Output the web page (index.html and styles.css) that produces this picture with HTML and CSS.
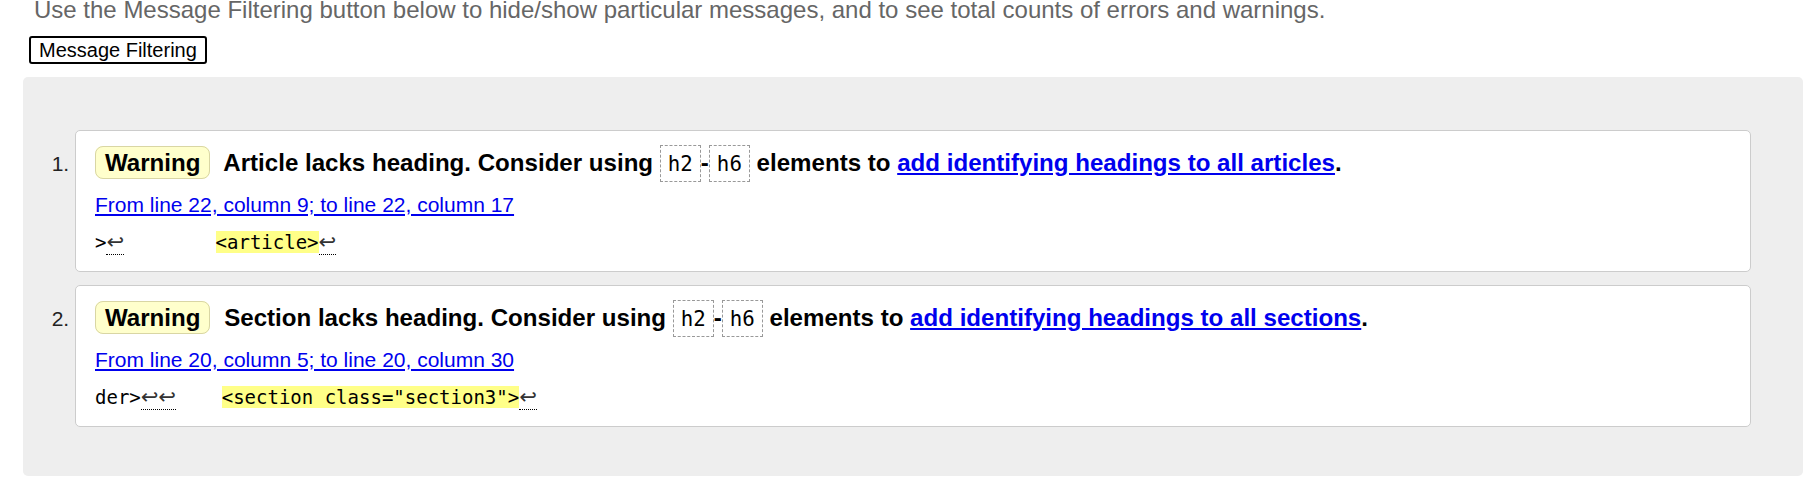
FILE: index.html
```html
<!DOCTYPE html>
<html lang="en">
<head>
<meta charset="utf-8">
<title>Validation messages</title>
<link rel="stylesheet" href="styles.css">
</head>
<body>
<div class="page">
  <p class="intro">Use the Message Filtering button below to hide/show particular messages, and to see total counts of errors and warnings.</p>
  <div class="filters"><button class="filter-btn" type="button">Message Filtering</button></div>
  <ol class="results">
    <li class="card">
      <p class="msg"><strong class="badge">Warning</strong> <span>Article lacks heading. Consider using <code>h2</code>-<code>h6</code> elements to <a href="#">add identifying headings to all articles</a>.</span></p>
      <p class="location"><a href="#">From line 22, column 9; to line 22, column 17</a></p>
      <p class="extract">&gt;<span class="lf">↩</span>        <b>&lt;article&gt;</b><span class="lf">↩</span></p>
    </li>
    <li class="card">
      <p class="msg"><strong class="badge">Warning</strong> <span>Section lacks heading. Consider using <code>h2</code>-<code>h6</code> elements to <a href="#">add identifying headings to all sections</a>.</span></p>
      <p class="location"><a href="#">From line 20, column 5; to line 20, column 30</a></p>
      <p class="extract">der&gt;<span class="lf">↩↩</span>    <b>&lt;section class="section3"&gt;</b><span class="lf">↩</span></p>
    </li>
  </ol>
</div>
</body>
</html>
```

FILE: styles.css
```css
html, body {
  margin: 0;
  background: #fff;
}

body {
  font-family: "Liberation Sans", Arial, sans-serif;
  color: #111;
}

.page {
  padding: 0 17px 0 23px;
}

.intro {
  margin: -4px 0 0;
  padding-left: 11px;
  font-size: 24px;
  line-height: 27px;
  color: #666;
  white-space: nowrap;
}

.filters {
  display: flex;
  margin-top: 13px;
  margin-left: 6px;
}

.filter-btn {
  font-family: "Liberation Sans", Arial, sans-serif;
  font-size: 20px;
  line-height: 22px;
  padding: 1px 8px;
  border: 2px solid #000;
  border-radius: 3px;
  background: #fff;
  color: #000;
}

.results {
  margin: 13px 0 0;
  padding: 53px 52px 49px 52px;
  background: #eee;
  border-radius: 5px;
  list-style: decimal outside;
  font-size: 21px;
}

.card {
  background: #fff;
  border: 1px solid #ccc;
  border-radius: 5px;
  padding: 14px 19px 15px;
}

.card::marker {
  color: #222;
}

.card + .card {
  margin-top: 13px;
}

.msg {
  margin: 0;
  font-size: 24.1px;
  font-weight: bold;
  line-height: 36px;
  color: #000;
  white-space: nowrap;
}

.badge {
  background: #ffc;
  border: 1px solid #d9d6a4;
  border-radius: 8px;
  padding: 2px 9px;
  margin-right: 7px;
}

.msg code {
  font-family: "DejaVu Sans Mono", monospace;
  font-weight: normal;
  font-size: 20.8px;
  line-height: 24px;
  border: 1px dashed #999;
  padding: 6px 7px 5px;
}

a {
  color: #00e;
  text-decoration: underline;
}

.location {
  margin: 10px 0 0;
  line-height: 28px;
}

.extract {
  margin: 9px 0 0;
  font-family: "DejaVu Sans Mono", monospace;
  font-size: 19px;
  line-height: 28px;
  white-space: pre;
  color: #000;
}

.extract b {
  background: #ff8;
  font-weight: normal;
}

.lf {
  font-family: "DejaVu Sans", sans-serif;
  font-size: 21px;
  line-height: 1;
  color: #333;
  border-bottom: 1px dotted #000;
}
```
